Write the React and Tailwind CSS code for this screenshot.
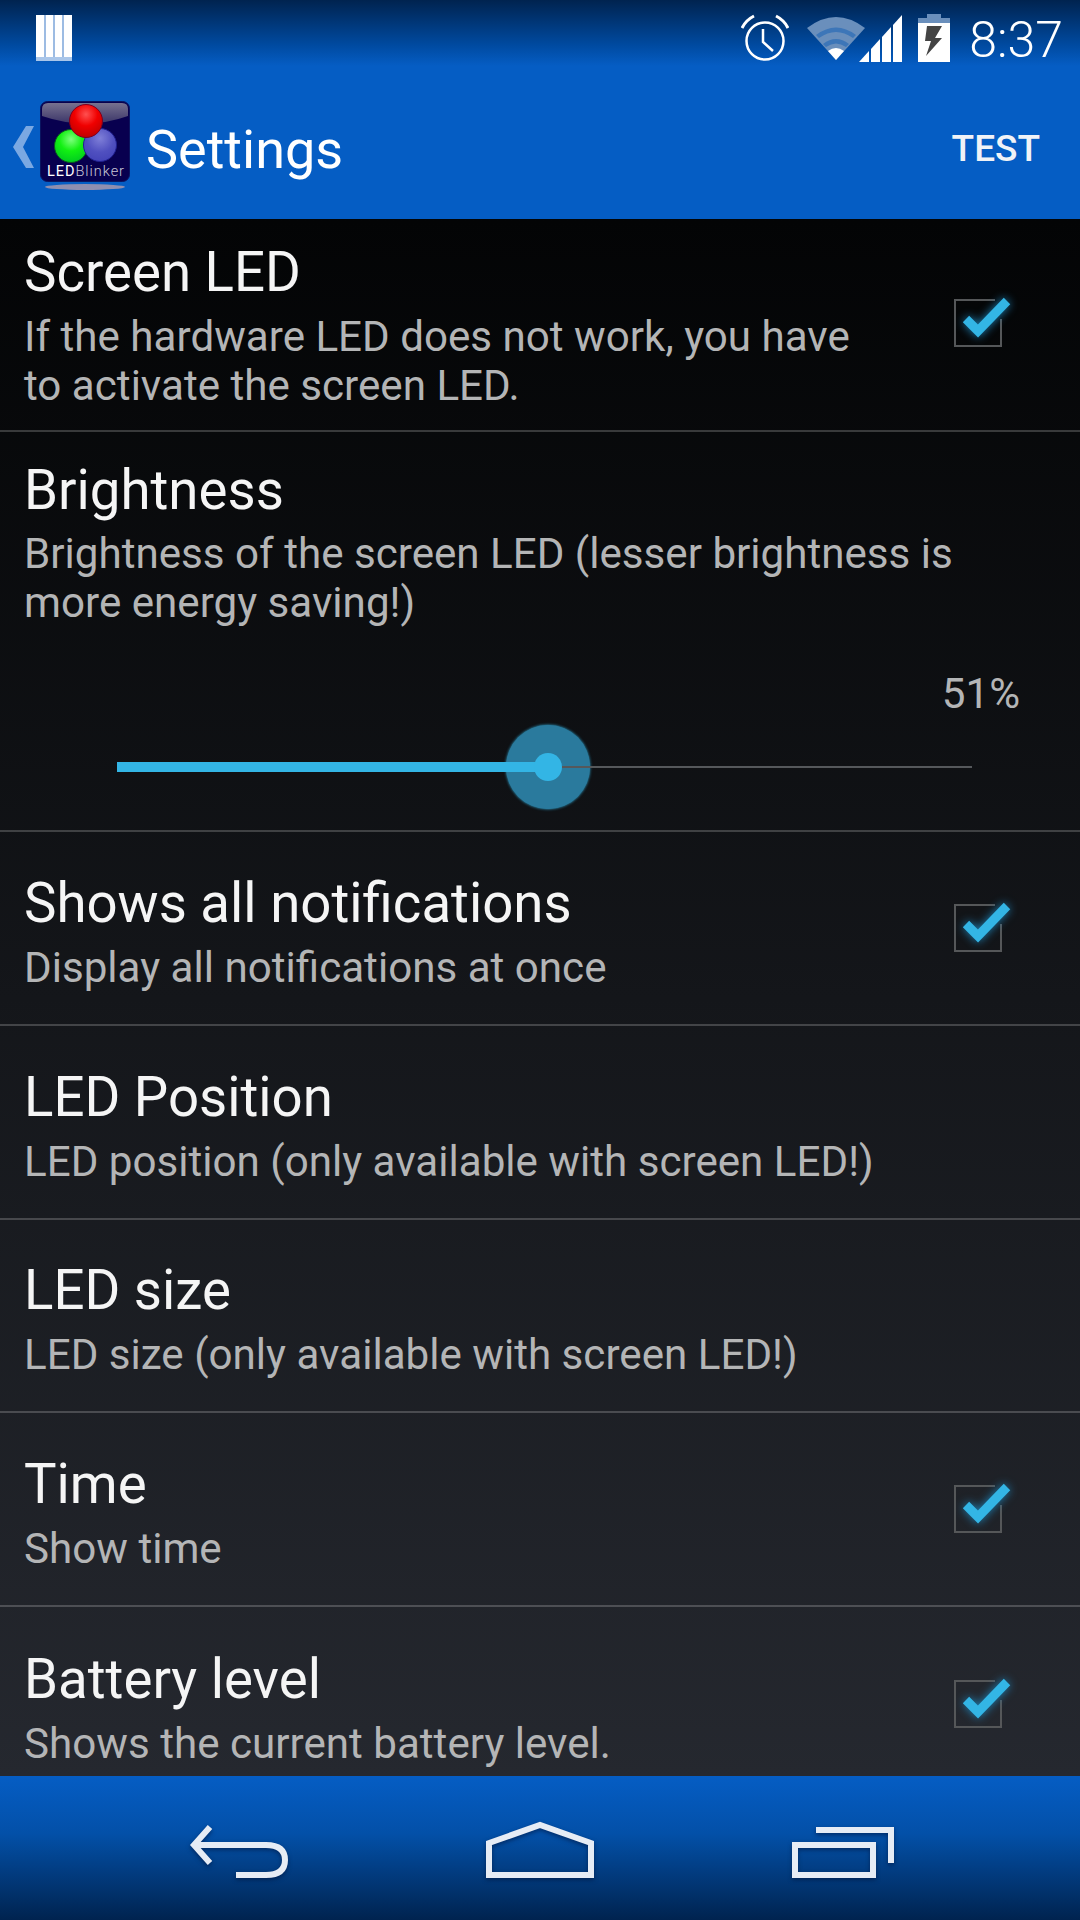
const rows = [
  { title: 'Shows all notifications', summary: 'Display all notifications at once', checked: true },
  { title: 'LED Position', summary: 'LED position (only available with screen LED!)' },
  { title: 'LED size', summary: 'LED size (only available with screen LED!)' },
  { title: 'Time', summary: 'Show time', checked: true },
];

function Checkbox({ className = 'mb-[10px]' }) {
  return (
    <svg width="72" height="66" viewBox="0 0 72 66" fill="none" className={`shrink-0 mr-[60px] ${className}`}>
      <path d="M47 15H7V61H53V34" stroke="#555759" strokeWidth="2" />
      <path d="M18 34L30 46L59 16" stroke="#33b5e5" strokeWidth="9" className="drop-shadow-[0_0_5px_#1d83b8]" />
    </svg>
  );
}

function Row({ title, summary, checked, last }) {
  return (
    <div className={`flex items-center shrink-0 pl-[24px] h-[193.75px] ${last ? '' : 'border-b-2 border-white/20'}`}>
      <div className="flex-1 min-w-0 pt-[3px]">
        <div className="text-[54.6px] leading-[72px] text-[#f5f5f5]">{title}</div>
        <div className="text-[42.15px] leading-[49px] mt-[4px] text-[#b4b5b6]">{summary}</div>
      </div>
      {checked && <Checkbox />}
    </div>
  );
}

function Logo() {
  return (
    <svg width="92" height="92" viewBox="0 0 92 92" className="shrink-0">
      <defs>
        <radialGradient id="r" cx="0.5" cy="0.3" r="0.7"><stop offset="0" stopColor="#ff5050" /><stop offset="0.5" stopColor="#f00000" /><stop offset="1" stopColor="#c00000" /></radialGradient>
        <radialGradient id="g" cx="0.5" cy="0.3" r="0.7"><stop offset="0" stopColor="#7dff7d" /><stop offset="0.5" stopColor="#12f012" /><stop offset="1" stopColor="#00cc20" /></radialGradient>
        <radialGradient id="b" cx="0.5" cy="0.3" r="0.7"><stop offset="0" stopColor="#7f7fd8" /><stop offset="0.6" stopColor="#5050c0" /><stop offset="1" stopColor="#4444b8" /></radialGradient>
        <linearGradient id="gloss" x1="0" y1="0" x2="0" y2="1"><stop offset="0" stopColor="#77728f" /><stop offset="1" stopColor="#3a3468" /></linearGradient>
      </defs>
      <rect x="0.5" y="0.5" width="89" height="80" rx="7" fill="#08004f" stroke="#0a1560" />
      <path d="M2 8Q2 2 8 2H82Q88 2 88 8V15Q46 30 2 15Z" fill="url(#gloss)" />
      <circle cx="31" cy="45" r="16.5" fill="url(#g)" stroke="#0a5a20" />
      <circle cx="60" cy="44" r="16.5" fill="url(#b)" stroke="#202090" />
      <circle cx="46" cy="20" r="16.5" fill="url(#r)" stroke="#7a0020" />
      <text x="7" y="75" fontSize="14.5" fill="#ffffff" fontFamily="Roboto, sans-serif" textLength="77">LED<tspan fill="#c8c8d8" fontWeight="300">Blinker</tspan></text>
      <ellipse cx="45" cy="86" rx="40" ry="3" fill="#8f8fb0" />
    </svg>
  );
}

function StatusIcons() {
  return (
    <div className="flex items-center">
      {/* alarm */}
      <svg width="48" height="48" viewBox="0 0 48 48" fill="none" stroke="#fff" className="mr-[18px]">
        <circle cx="24" cy="27" r="18.5" strokeWidth="2.5" />
        <path d="M22 15V28L32 37" strokeWidth="2.5" />
        <path d="M1 14Q5 6 13 2M47 14Q43 6 35 2" strokeWidth="3" />
      </svg>
      {/* wifi */}
      <svg width="60" height="46" viewBox="0 0 60 46" className="-mr-[8px]">
        <path d="M0 13Q29 -9 58 13L29 45Z" fill="#6a8fbc" />
        <path d="M9 20Q29 5 49 20L46 23Q29 11 12 23Z" fill="#3d76b8" />
        <path d="M16 29Q29 19 42 29L39 32Q29 25 19 32Z" fill="#3d76b8" />
        <path d="M21 36Q29 30 37 36L29 45Z" fill="#ffffff" />
      </svg>
      {/* signal */}
      <svg width="44" height="48" viewBox="0 0 44 48" fill="#fff" className="mr-[15px]">
        <path d="M0 48L10 37V48Z" />
        <path d="M12 35L21 25V48H12Z" />
        <path d="M23 23L32 13V48H23Z" />
        <path d="M34 11L43 1V48H34Z" />
      </svg>
      {/* battery */}
      <svg width="32" height="48" viewBox="0 0 32 48" className="mr-[19px]">
        <path d="M9 0H23V4H32V9H0V4H9Z" fill="#6a8fbc" />
        <rect x="0" y="9" width="32" height="39" fill="#fff" />
        <path d="M9 12H24L17 24H24L8 42L13 27H7Z" fill="#444" />
      </svg>
      <span className="text-[50px] leading-none font-light text-white pt-[4px]">8:37</span>
    </div>
  );
}

function Slider() {
  return (
    <div className="pl-[117px] pr-[108px] mt-[44px]">
      <div className="relative flex items-center h-[10px]">
        <div className="relative z-10 h-[10px] w-[431px] bg-[#33b5e5]" />
        <div className="relative z-10 flex-1 h-[2px] bg-[#55585b]" />
        <div className="absolute left-[389px] -top-[37px] w-[84px] h-[84px] rounded-full bg-[#2a7a9d] flex items-center justify-center shadow-[0_0_3px_#33b5e5]">
          <div className="relative z-20 w-[28px] h-[28px] rounded-full bg-[#33b5e5]" />
        </div>
      </div>
    </div>
  );
}

export default function App() {
  return (
    <div className="w-[1080px] h-[1920px] overflow-hidden flex flex-col font-[Roboto,sans-serif] bg-black">
      <header className="shrink-0 h-[219px] bg-[linear-gradient(to_bottom,#00234f_0px,#004aa0_45px,#055dc4_66px,#055dc4_100%)]">
        <div className="flex items-center justify-between h-[75px] pl-[36px] pr-[17px]">
          <svg width="36" height="46" viewBox="0 0 36 46">
            <rect width="36" height="46" fill="#fff" />
            <path d="M9 0V46M18 0V46M27 0V46" stroke="#7ea6da" strokeWidth="1.5" />
            <rect y="42" width="36" height="4" fill="#a9c6ea" />
          </svg>
          <StatusIcons />
        </div>
        <div className="flex items-center h-[144px]">
          <span className="ml-[13px] w-[27px] shrink-0">
            <svg width="21" height="42" viewBox="0 0 21 42"><path d="M21 0H13L0 21L13 42H21L10 21Z" fill="#7ba8e2" /></svg>
          </span>
          <Logo />
          <span className="ml-[14px] pt-[4px] text-[54px] text-white">Settings</span>
          <span className="ml-auto mr-[40px] pt-[4px] text-[37px] font-medium text-[#f1f3f7]">TEST</span>
        </div>
      </header>

      <main className="flex-1 min-h-0 overflow-hidden flex flex-col bg-[linear-gradient(to_bottom,#030405,#25282f)]">
        <div className="flex items-center shrink-0 pl-[24px] h-[213px] border-b-2 border-white/20">
          <div className="flex-1 min-w-0 pr-[60px] pb-[4px]">
            <div className="text-[54.6px] leading-[72px] text-[#f5f5f5]">Screen LED</div>
            <div className="text-[42.15px] leading-[49px] mt-[4px] text-[#b4b5b6]">If the hardware LED does not work, you have to activate the screen LED.</div>
          </div>
          <Checkbox className="mb-[13px]" />
        </div>
        <div className="shrink-0 h-[400px] pl-[24px] border-b-2 border-white/20 pt-[22px]">
          <div className="text-[54.6px] leading-[72px] text-[#f5f5f5]">Brightness</div>
          <div className="text-[42.15px] leading-[49px] mt-[3px] text-[#b4b5b6] pr-[40px]">Brightness of the screen LED (lesser brightness is more energy saving!)</div>
          <div className="text-right text-[42.15px] leading-[49px] text-[#b4b5b6] pr-[60px] mt-[42px]">51%</div>
          <div className="-ml-[24px]"><Slider /></div>
        </div>
        {rows.map((r) => <Row key={r.title} {...r} />)}
        <Row title="Battery level" summary="Shows the current battery level." checked last />
      </main>

      <footer className="shrink-0 h-[144px] bg-[linear-gradient(to_bottom,#055dc4,#0350a8_40%,#00234f)]">
        <svg width="1080" height="144" viewBox="0 1776 1080 144" fill="none" stroke="#e6ecf5" strokeWidth="6" className="drop-shadow-[0_2px_2px_rgba(0,20,60,0.6)]">
          <path d="M210 1827L194 1845L210 1863M194 1845H266Q285 1845 285 1860Q285 1875 266 1875H236" />
          <path d="M489 1875H591V1843L540 1825L489 1843Z" />
          <path d="M795 1845H873V1875H795Z" />
          <path d="M816 1830H891V1863" />
        </svg>
      </footer>
    </div>
  );
}
